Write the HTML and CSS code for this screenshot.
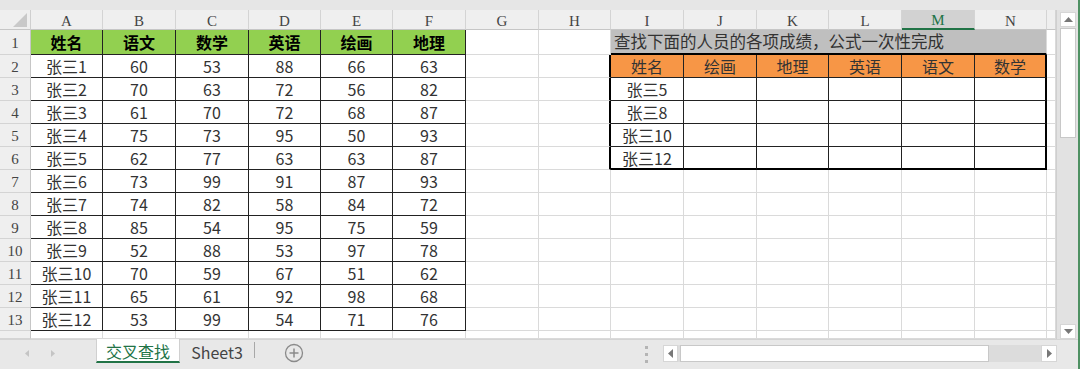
FILE: index.html
```html
<!DOCTYPE html>
<html lang="zh-CN">
<head>
    <meta charset="UTF-8">
    <title>交叉查找</title>
    <link rel="stylesheet" href="styles.css">
</head>
<body>
    <div class="excel">
        <div class="top-band"></div>

        <div class="work">
            <div class="sheet" id="sheet"></div>

            <div class="vscroll">
                <div class="sb-btn">
                    <svg width="9" height="5" viewBox="0 0 9 5"><polygon points="4.5,0 9,5 0,5" fill="#777"/></svg>
                </div>
                <div class="sb-thumb"></div>
                <div class="sb-btn sb-down">
                    <svg width="9" height="5" viewBox="0 0 9 5"><polygon points="0,0 9,0 4.5,5" fill="#777"/></svg>
                </div>
            </div>
        </div>

        <div class="tabbar">
            <div class="tab-nav">
                <svg width="96" height="29" viewBox="0 0 96 29">
                    <polygon points="29,10 29,17 25,13.5" fill="#c4c4c4"/>
                    <polygon points="51,10 51,17 55,13.5" fill="#c4c4c4"/>
                </svg>
            </div>
            <div class="tab active">交叉查找</div>
            <div class="tab">Sheet3</div>
            <div class="tab-sep"></div>
            <div class="tab-add">
                <svg width="20" height="20" viewBox="0 0 20 20">
                    <circle cx="10" cy="10" r="8.5" fill="none" stroke="#8a8a8a" stroke-width="1.3"/>
                    <path d="M10 5.5v9M5.5 10h9" stroke="#8a8a8a" stroke-width="1.5"/>
                </svg>
            </div>
            <div class="spacer"></div>
            <div class="dots">
                <span></span><span></span><span></span>
            </div>
            <div class="hscroll">
                <div class="hs-btn">
                    <svg width="5" height="9" viewBox="0 0 5 9"><polygon points="5,0 5,9 0,4.5" fill="#777"/></svg>
                </div>
                <div class="hs-thumb"></div>
                <div class="hs-track"></div>
                <div class="hs-btn hs-right">
                    <svg width="5" height="9" viewBox="0 0 5 9"><polygon points="0,0 5,4.5 0,9" fill="#777"/></svg>
                </div>
            </div>
        </div>
    </div>

    <script>
        const sheet = document.getElementById('sheet');

        const letters = ['A', 'B', 'C', 'D', 'E', 'F', 'G', 'H', 'I', 'J', 'K', 'L', 'M', 'N', ''];

        // A1:F13
        const scores = [
            ['姓名', '语文', '数学', '英语', '绘画', '地理'],
            ['张三1', 60, 53, 88, 66, 63],
            ['张三2', 70, 63, 72, 56, 82],
            ['张三3', 61, 70, 72, 68, 87],
            ['张三4', 75, 73, 95, 50, 93],
            ['张三5', 62, 77, 63, 63, 87],
            ['张三6', 73, 99, 91, 87, 93],
            ['张三7', 74, 82, 58, 84, 72],
            ['张三8', 85, 54, 95, 75, 59],
            ['张三9', 52, 88, 53, 97, 78],
            ['张三10', 70, 59, 67, 51, 62],
            ['张三11', 65, 61, 92, 98, 68],
            ['张三12', 53, 99, 54, 71, 76]
        ];

        // I2:N6
        const lookupHead = ['姓名', '绘画', '地理', '英语', '语文', '数学'];
        const lookupNames = ['张三5', '张三8', '张三10', '张三12'];

        function addCell(text, classes) {
            const cell = document.createElement('div');
            cell.className = 'cell ' + classes.join(' ');
            if (text !== undefined && text !== '') cell.textContent = text;
            sheet.appendChild(cell);
        }

        for (let r = 0; r <= 14; r++) {
            if (r === 0) {
                addCell('', ['corner']);
                letters.forEach(l => addCell(l, l === 'M' ? ['colhead', 'sel'] : ['colhead']));
                continue;
            }

            addCell(r, r === 14 ? ['rowhead', 'cut'] : ['rowhead']);

            for (let c = 1; c <= 15; c++) {
                const cls = r === 14 ? ['cut'] : [];

                if (r <= 13 && c <= 6) {
                    cls.push('bk');
                    if (r === 1) cls.push('green');
                    addCell(scores[r - 1][c - 1], cls);
                } else if (r === 1 && c === 9) {
                    addCell('查找下面的人员的各项成绩，公式一次性完成', ['title']);
                    c = 14;
                } else if (r >= 2 && r <= 6 && c >= 9 && c <= 14) {
                    cls.push('bk');
                    if (c === 14) cls.push('thick-r');
                    if (r === 6) cls.push('thick-b');
                    let text = '';
                    if (r === 2) {
                        cls.push('orange');
                        text = lookupHead[c - 9];
                    } else if (c === 9) {
                        text = lookupNames[r - 3];
                    }
                    addCell(text, cls);
                } else {
                    if (r >= 2 && r <= 6 && c === 8) cls.push('thick-r');
                    addCell('', cls);
                }
            }
        }
    </script>
</body>
</html>
```

FILE: styles.css
```css
* {
    box-sizing: border-box;
}

body {
    margin: 0;
    width: 1080px;
    height: 369px;
    overflow: hidden;
    background-color: #e8e8e8;
    font-family: "Noto Sans CJK SC", "Noto Sans", sans-serif;
}

.excel {
    width: 1080px;
    height: 369px;
    display: flex;
    flex-direction: column;
    border-right: 2px solid #4f9163;
    background-color: #e8e8e8;
}

.top-band {
    flex: none;
    height: 10px;
    background-color: #e6e6e6;
}

.work {
    flex: none;
    display: flex;
    height: 329px;
}

/* grid */

.sheet {
    display: grid;
    grid-template-columns: 31px 72px 73px 73px 72px 72px 73px 73px 72px 73px 73px 72px 73px 73px 72px 9px;
    grid-template-rows: 20px 25px repeat(12, 23px) 8px;
    width: 1056px;
    background-color: white;
    overflow: hidden;
}

.cell {
    display: flex;
    align-items: center;
    justify-content: center;
    border-right: 1px solid #dadada;
    border-bottom: 1px solid #dadada;
    font-size: 16px;
    line-height: 1;
    color: #333;
    white-space: nowrap;
    overflow: hidden;
}

.corner {
    position: relative;
    background-color: #efefef;
    border-right-color: #cfcfcf;
    border-bottom-color: #c6c6c6;
}

.corner::after {
    content: '';
    position: absolute;
    right: 3px;
    bottom: 2px;
    border-left: 14px solid transparent;
    border-bottom: 14px solid #c9c9c9;
}

.colhead,
.rowhead {
    background-color: #efefef;
    font-family: "Liberation Serif", "DejaVu Serif", serif;
    font-size: 15px;
    color: #444;
}

.colhead {
    padding-top: 3px;
    border-right-color: #d4d4d4;
    border-bottom-color: #c6c6c6;
}

.rowhead {
    padding-top: 2px;
    border-right-color: #c6c6c6;
    border-bottom-color: #d4d4d4;
}

.colhead.sel {
    background-color: #d2d2d2;
    color: #217346;
    border-bottom: 2px solid #217346;
}

.cell.cut {
    align-items: flex-start;
    padding-top: 6px;
}

.bk {
    border-right-color: #222;
    border-bottom-color: #222;
}

.green {
    background-color: #92d050;
    font-weight: 700;
    color: #000;
}

.orange {
    background-color: #f79646;
}

.title {
    grid-column: span 6;
    justify-content: flex-start;
    padding-left: 3px;
    background-color: #bfbfbf;
    border-bottom: 2px solid #000;
    font-size: 16.5px;
}

.thick-r {
    border-right: 2px solid #000;
}

.thick-b {
    border-bottom: 2px solid #000;
}

/* vertical scrollbar */

.vscroll {
    flex: none;
    width: 22px;
    display: flex;
    flex-direction: column;
    padding: 2px 2px 0 3px;
    background-color: #e2e2e2;
    border-left: 1px solid #cfcfcf;
}

.sb-btn {
    height: 15px;
    display: flex;
    align-items: center;
    justify-content: center;
    background-color: white;
    border: 1px solid #d6d6d6;
}

.sb-thumb {
    height: 110px;
    margin-top: 1px;
    background-color: white;
    border: 1px solid #c8c8c8;
}

.sb-down {
    margin-top: auto;
}

/* sheet tabs */

.tabbar {
    flex: none;
    height: 30px;
    display: flex;
    align-items: flex-start;
    border-top: 1px solid #d4d4d4;
    background-color: #e8e8e8;
}

.tab-nav {
    width: 96px;
    height: 29px;
}

.tab-nav svg {
    display: block;
}

.tab {
    width: 74px;
    height: 23px;
    display: flex;
    align-items: center;
    justify-content: center;
    font-size: 16px;
    color: #444;
}

.tab.active {
    width: 84px;
    height: 24px;
    margin-top: -1px;
    padding-top: 1px;
    background-color: white;
    color: #217346;
    border-left: 1px solid #d0d0d0;
    border-right: 1px solid #d0d0d0;
    border-bottom: 2px solid #217346;
}

.tab-sep {
    width: 1px;
    height: 16px;
    margin-top: 2px;
    background-color: #a8a8a8;
}

.tab-add {
    margin-left: 29px;
    margin-top: 3px;
    height: 20px;
}

.tab-add svg {
    display: block;
}

.spacer {
    flex: 1;
}

.dots {
    width: 4px;
    margin-top: 6px;
    margin-right: 15px;
    display: flex;
    flex-direction: column;
    align-items: center;
    gap: 4px;
}

.dots span {
    width: 3px;
    height: 3px;
    background-color: #b4b4b4;
}

.hscroll {
    width: 394px;
    height: 17px;
    margin-top: 5px;
    margin-right: 21px;
    display: flex;
    background-color: #dcdcdc;
}

.hs-btn {
    width: 15px;
    display: flex;
    align-items: center;
    justify-content: center;
    background-color: white;
    border: 1px solid #d6d6d6;
}

.hs-thumb {
    width: 309px;
    margin-left: 2px;
    background-color: white;
    border: 1px solid #c8c8c8;
}

.hs-track {
    flex: 1;
}

.hs-right {
    width: 16px;
}
```
